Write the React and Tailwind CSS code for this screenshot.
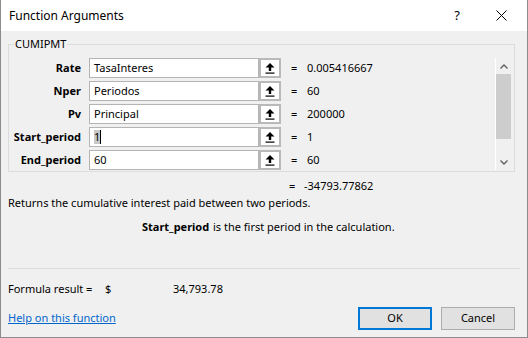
import React from "react";

const args = [
  { name: "Rate", input: "TasaInteres", value: "0.005416667" },
  { name: "Nper", input: "Periodos", value: "60" },
  { name: "Pv", input: "Principal", value: "200000" },
  { name: "Start_period", input: "1", value: "1", active: true },
  { name: "End_period", input: "60", value: "60" },
];

const RefButton = () => (
  <div className="w-[22px] h-[20px] border-2 border-[#b9b9b9] bg-white flex items-center justify-center">
    <svg width="10" height="11" viewBox="0 0 10 11">
      <path d="M5 0 L9.5 4.5 L6.2 4.5 L6.2 8 L3.8 8 L3.8 4.5 L0.5 4.5 Z" fill="#000" />
      <rect x="0.5" y="9.5" width="9" height="1.2" fill="#000" />
    </svg>
  </div>
);

const ArgRow = ({ arg }) => (
  <div className="flex items-center h-[20px]">
    <div className="w-[72px] text-right font-bold whitespace-nowrap">{arg.name}</div>
    <div className="ml-[8px] w-[170px] h-[20px] border border-[#b4b4b4] bg-white flex items-center px-[4px]">
      {arg.active ? (
        <span className="flex items-center">
          <span className="bg-[#c8c8c8] leading-[14px]">1</span>
          <span className="w-[1px] h-[14px] bg-black" />
        </span>
      ) : (
        arg.input
      )}
    </div>
    <RefButton />
    <div className="ml-[10px] w-[16px]">=</div>
    <div>{arg.value}</div>
  </div>
);

export default function App() {
  return (
    <div
      className="w-[528px] h-[338px] bg-[#f0f0f0] border-r border-b border-l border-[#8c8c8c] text-[11px] text-black flex flex-col"
      style={{ fontFamily: '"Segoe UI", "Noto Sans", sans-serif' }}
    >
      <div className="h-[31px] bg-white flex items-center pl-[8px] pr-[20px] shrink-0 text-[12px]">
        <div className="flex-1">Function Arguments</div>
        <div className="mr-[36px] text-[13px]">?</div>
        <svg width="11" height="11" viewBox="0 0 11 11">
          <path d="M0.5 0.5 L10.5 10.5 M10.5 0.5 L0.5 10.5" stroke="#000" strokeWidth="1" />
        </svg>
      </div>

      <div className="px-[7px] flex flex-col flex-1">
        <fieldset className="mt-[5px] border border-[#dcdcdc] w-[507px] h-[136px] px-0 relative">
          <legend className="ml-[5px] px-[1px] leading-[16px]">CUMIPMT</legend>
          <div className="flex">
            <div className="flex flex-col gap-[3px] pt-[6px] flex-1">
              {args.map((a) => (
                <ArgRow key={a.name} arg={a} />
              ))}
            </div>
            <div className="mt-[6px] mr-[3px] h-[112px] w-[16px] border-l border-white flex flex-col items-center">
              <div className="h-[16px] flex items-center justify-center">
                <svg width="8" height="5" viewBox="0 0 8 5">
                  <path d="M0.5 4.5 L4 1 L7.5 4.5" stroke="#606060" strokeWidth="1.4" fill="none" />
                </svg>
              </div>
              <div className="w-[15px] h-[65px] bg-[#cdcdcd]" />
              <div className="flex-1" />
              <div className="h-[16px] flex items-center justify-center">
                <svg width="8" height="5" viewBox="0 0 8 5">
                  <path d="M0.5 0.5 L4 4 L7.5 0.5" stroke="#606060" strokeWidth="1.4" fill="none" />
                </svg>
              </div>
            </div>
          </div>
        </fieldset>

        <div className="flex mt-[6px] h-[16px] items-center">
          <div className="ml-[281px] w-[15px]">=</div>
          <div>-34793.77862</div>
        </div>
        <div className="mt-[1px] h-[17px] flex items-center">
          Returns the cumulative interest paid between two periods.
        </div>
        <div className="mt-[7px] h-[17px] flex items-center">
          <span className="ml-[134px] w-[71px] font-bold">Start_period</span>
          <span>is the first period in the calculation.</span>
        </div>

        <div className="flex-1" />
        <div className="h-[1px] bg-[#dcdcdc]" />

        <div className="mt-[12px] h-[16px] flex items-center">
          <span className="w-[97px]">Formula result =</span>
          <span className="w-[68px]">$</span>
          <span>34,793.78</span>
        </div>

        <div className="mt-[10px] mb-[7px] flex items-center">
          <a href="#" className="text-[#0066cc] underline flex-1">
            Help on this function
          </a>
          <button className="w-[74px] h-[23px] bg-[#e1e1e1] border-2 border-[#0078d7]">OK</button>
          <button className="ml-[9px] mr-[5px] w-[74px] h-[23px] bg-[#e1e1e1] border border-[#adadad]">
            Cancel
          </button>
        </div>
      </div>
    </div>
  );
}
